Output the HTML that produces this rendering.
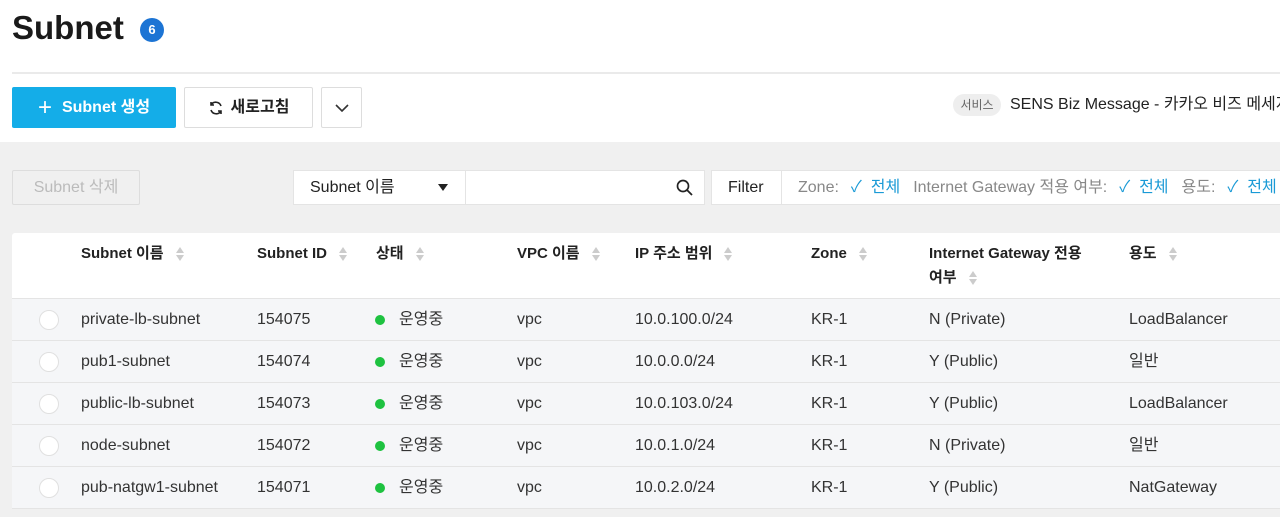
<!DOCTYPE html>
<html><head><meta charset="utf-8"><style>
*{box-sizing:border-box;margin:0;padding:0}
body{width:1280px;height:517px;overflow:hidden;background:#fff;font-family:"Liberation Sans","Noto Sans CJK KR",sans-serif;color:#222;position:relative}
.a{position:absolute;white-space:nowrap}
.btn{position:absolute;border:1px solid #ddd;border-radius:2px;background:#fff;display:flex;align-items:center;justify-content:center;font-size:16px;font-weight:bold;line-height:20px}
.th{position:absolute;font-size:15px;font-weight:bold;color:#222;line-height:20px}
.th *{vertical-align:middle}
.sort{display:inline-block;margin-left:12px;width:9px;height:14px;position:relative}
.sort:before{content:"";position:absolute;left:0;top:0;border-left:4.5px solid transparent;border-right:4.5px solid transparent;border-bottom:6px solid #ccc}
.sort:after{content:"";position:absolute;left:0;top:8px;border-left:4.5px solid transparent;border-right:4.5px solid transparent;border-top:6px solid #ccc}
.row{position:absolute;left:12px;width:1268px;height:42px;background:#f5f6f8;border-bottom:1px solid #e4e4e4;font-size:16px;color:#333}
.row span{position:absolute;top:0;height:42px;display:flex;align-items:center;white-space:nowrap;line-height:1}
.radio{position:absolute;left:27px;top:11px;width:20px;height:20px;border-radius:50%;background:#fff;border:1px solid #e0e0e0}
.dot{position:absolute;left:363px;top:16px;width:10px;height:10px;border-radius:50%;background:#1ec240}
.fl{display:flex;align-items:center;line-height:1}
</style></head><body>
<div class="a" style="left:12px;top:10px;font-size:33px;font-weight:bold;color:#1a1a1a;line-height:36px">Subnet</div>
<div class="a" style="left:140px;top:18px;width:24px;height:24px;border-radius:50%;background:#1c74d4;color:#fff;font-size:13px;font-weight:bold;text-align:center;line-height:24px">6</div>
<div class="a" style="left:12px;top:72px;width:1268px;height:2px;background:#eaeaea"></div>
<div class="btn" style="left:12px;top:87px;width:164px;height:41px;background:#14ade8;border-color:#14ade8;color:#fff"><span style="font-size:24px;font-weight:normal;margin-right:10px;line-height:20px">+</span>Subnet 생성</div>
<div class="btn" style="left:184px;top:87px;width:129px;height:41px;color:#222"><svg width="16" height="16" viewBox="0 0 16 16" style="margin-right:7px"><path d="M13 6A5.5 5.5 0 0 0 3 5M3 2v3h3M3 10a5.5 5.5 0 0 0 10 1M13 14v-3h-3" fill="none" stroke="#222" stroke-width="1.6"/></svg>새로고침</div>
<div class="btn" style="left:321px;top:87px;width:41px;height:41px"><svg width="14" height="8" viewBox="0 0 14 8"><path d="M1 1l6 6 6-6" fill="none" stroke="#333" stroke-width="1.6"/></svg></div>
<div class="a" style="left:953px;top:94px;width:48px;height:22px;border-radius:11px;background:#eee;font-size:12px;color:#666;text-align:center;line-height:22px">서비스</div>
<div class="a fl" style="left:1010px;top:94px;height:22px;font-size:16px;color:#222">SENS Biz Message - 카카오 비즈 메세지</div>
<div class="a" style="left:0;top:142px;width:1280px;height:375px;background:#f0f0f0"></div>
<div class="btn" style="left:12px;top:170px;width:128px;height:35px;background:#f0f0f0;color:#bbb;font-weight:normal">Subnet 삭제</div>
<div class="a" style="left:293px;top:170px;width:412px;height:35px;background:#fff;border:1px solid #e4e4e4"></div>
<div class="a" style="left:465px;top:170px;width:1px;height:35px;background:#e4e4e4"></div>
<div class="a fl" style="left:310px;top:170px;height:35px;font-size:16px;color:#222">Subnet 이름</div>
<div class="a" style="left:438px;top:184px;border-left:5px solid transparent;border-right:5px solid transparent;border-top:7px solid #222"></div>
<svg class="a" style="left:676px;top:179px" width="17" height="17" viewBox="0 0 17 17"><circle cx="7" cy="7" r="5.5" fill="none" stroke="#222" stroke-width="1.7"/><path d="M11 11l5 5" stroke="#222" stroke-width="1.8"/></svg>
<div class="a" style="left:711px;top:170px;width:580px;height:35px;background:#fff;border:1px solid #e4e4e4"></div>
<div class="a" style="left:781px;top:170px;width:1px;height:35px;background:#e4e4e4"></div>
<div class="a fl" style="left:728px;top:170px;height:35px;font-size:16px;color:#222">Filter</div>
<div class="a fl" style="left:798px;top:170px;height:35px;font-size:16px;color:#888">Zone:<span style="color:#1a9ad6;margin-left:12px">✓&nbsp; 전체</span><span style="margin-left:13px">Internet Gateway 적용 여부:</span><span style="color:#1a9ad6;margin-left:12px">✓&nbsp; 전체</span><span style="margin-left:13px">용도:</span><span style="color:#1a9ad6;margin-left:12px">✓&nbsp; 전체</span></div>
<div class="a" style="left:12px;top:233px;width:1268px;height:66px;background:#fff;border-radius:3px 0 0 0;border-bottom:1px solid #e4e4e4"></div>
<div class="th" style="left:81px;top:244px"><span>Subnet 이름</span><span class="sort"></span></div>
<div class="th" style="left:257px;top:244px"><span>Subnet ID</span><span class="sort"></span></div>
<div class="th" style="left:376px;top:244px"><span>상태</span><span class="sort"></span></div>
<div class="th" style="left:517px;top:244px"><span>VPC 이름</span><span class="sort"></span></div>
<div class="th" style="left:635px;top:244px"><span>IP 주소 범위</span><span class="sort"></span></div>
<div class="th" style="left:811px;top:244px"><span>Zone</span><span class="sort"></span></div>
<div class="th" style="left:929px;top:242px;line-height:24px"><span>Internet Gateway 전용</span><br><span>여부</span><span class="sort"></span></div>
<div class="th" style="left:1129px;top:244px"><span>용도</span><span class="sort"></span></div>

<div class="row" style="top:299px"><div class="radio"></div><span style="left:69px">private-lb-subnet</span><span style="left:245px">154075</span><div class="dot"></div><span style="left:387px">운영중</span><span style="left:505px">vpc</span><span style="left:623px">10.0.100.0/24</span><span style="left:799px">KR-1</span><span style="left:917px">N (Private)</span><span style="left:1117px">LoadBalancer</span></div>
<div class="row" style="top:341px"><div class="radio"></div><span style="left:69px">pub1-subnet</span><span style="left:245px">154074</span><div class="dot"></div><span style="left:387px">운영중</span><span style="left:505px">vpc</span><span style="left:623px">10.0.0.0/24</span><span style="left:799px">KR-1</span><span style="left:917px">Y (Public)</span><span style="left:1117px">일반</span></div>
<div class="row" style="top:383px"><div class="radio"></div><span style="left:69px">public-lb-subnet</span><span style="left:245px">154073</span><div class="dot"></div><span style="left:387px">운영중</span><span style="left:505px">vpc</span><span style="left:623px">10.0.103.0/24</span><span style="left:799px">KR-1</span><span style="left:917px">Y (Public)</span><span style="left:1117px">LoadBalancer</span></div>
<div class="row" style="top:425px"><div class="radio"></div><span style="left:69px">node-subnet</span><span style="left:245px">154072</span><div class="dot"></div><span style="left:387px">운영중</span><span style="left:505px">vpc</span><span style="left:623px">10.0.1.0/24</span><span style="left:799px">KR-1</span><span style="left:917px">N (Private)</span><span style="left:1117px">일반</span></div>
<div class="row" style="top:467px"><div class="radio"></div><span style="left:69px">pub-natgw1-subnet</span><span style="left:245px">154071</span><div class="dot"></div><span style="left:387px">운영중</span><span style="left:505px">vpc</span><span style="left:623px">10.0.2.0/24</span><span style="left:799px">KR-1</span><span style="left:917px">Y (Public)</span><span style="left:1117px">NatGateway</span></div>
</body></html>
